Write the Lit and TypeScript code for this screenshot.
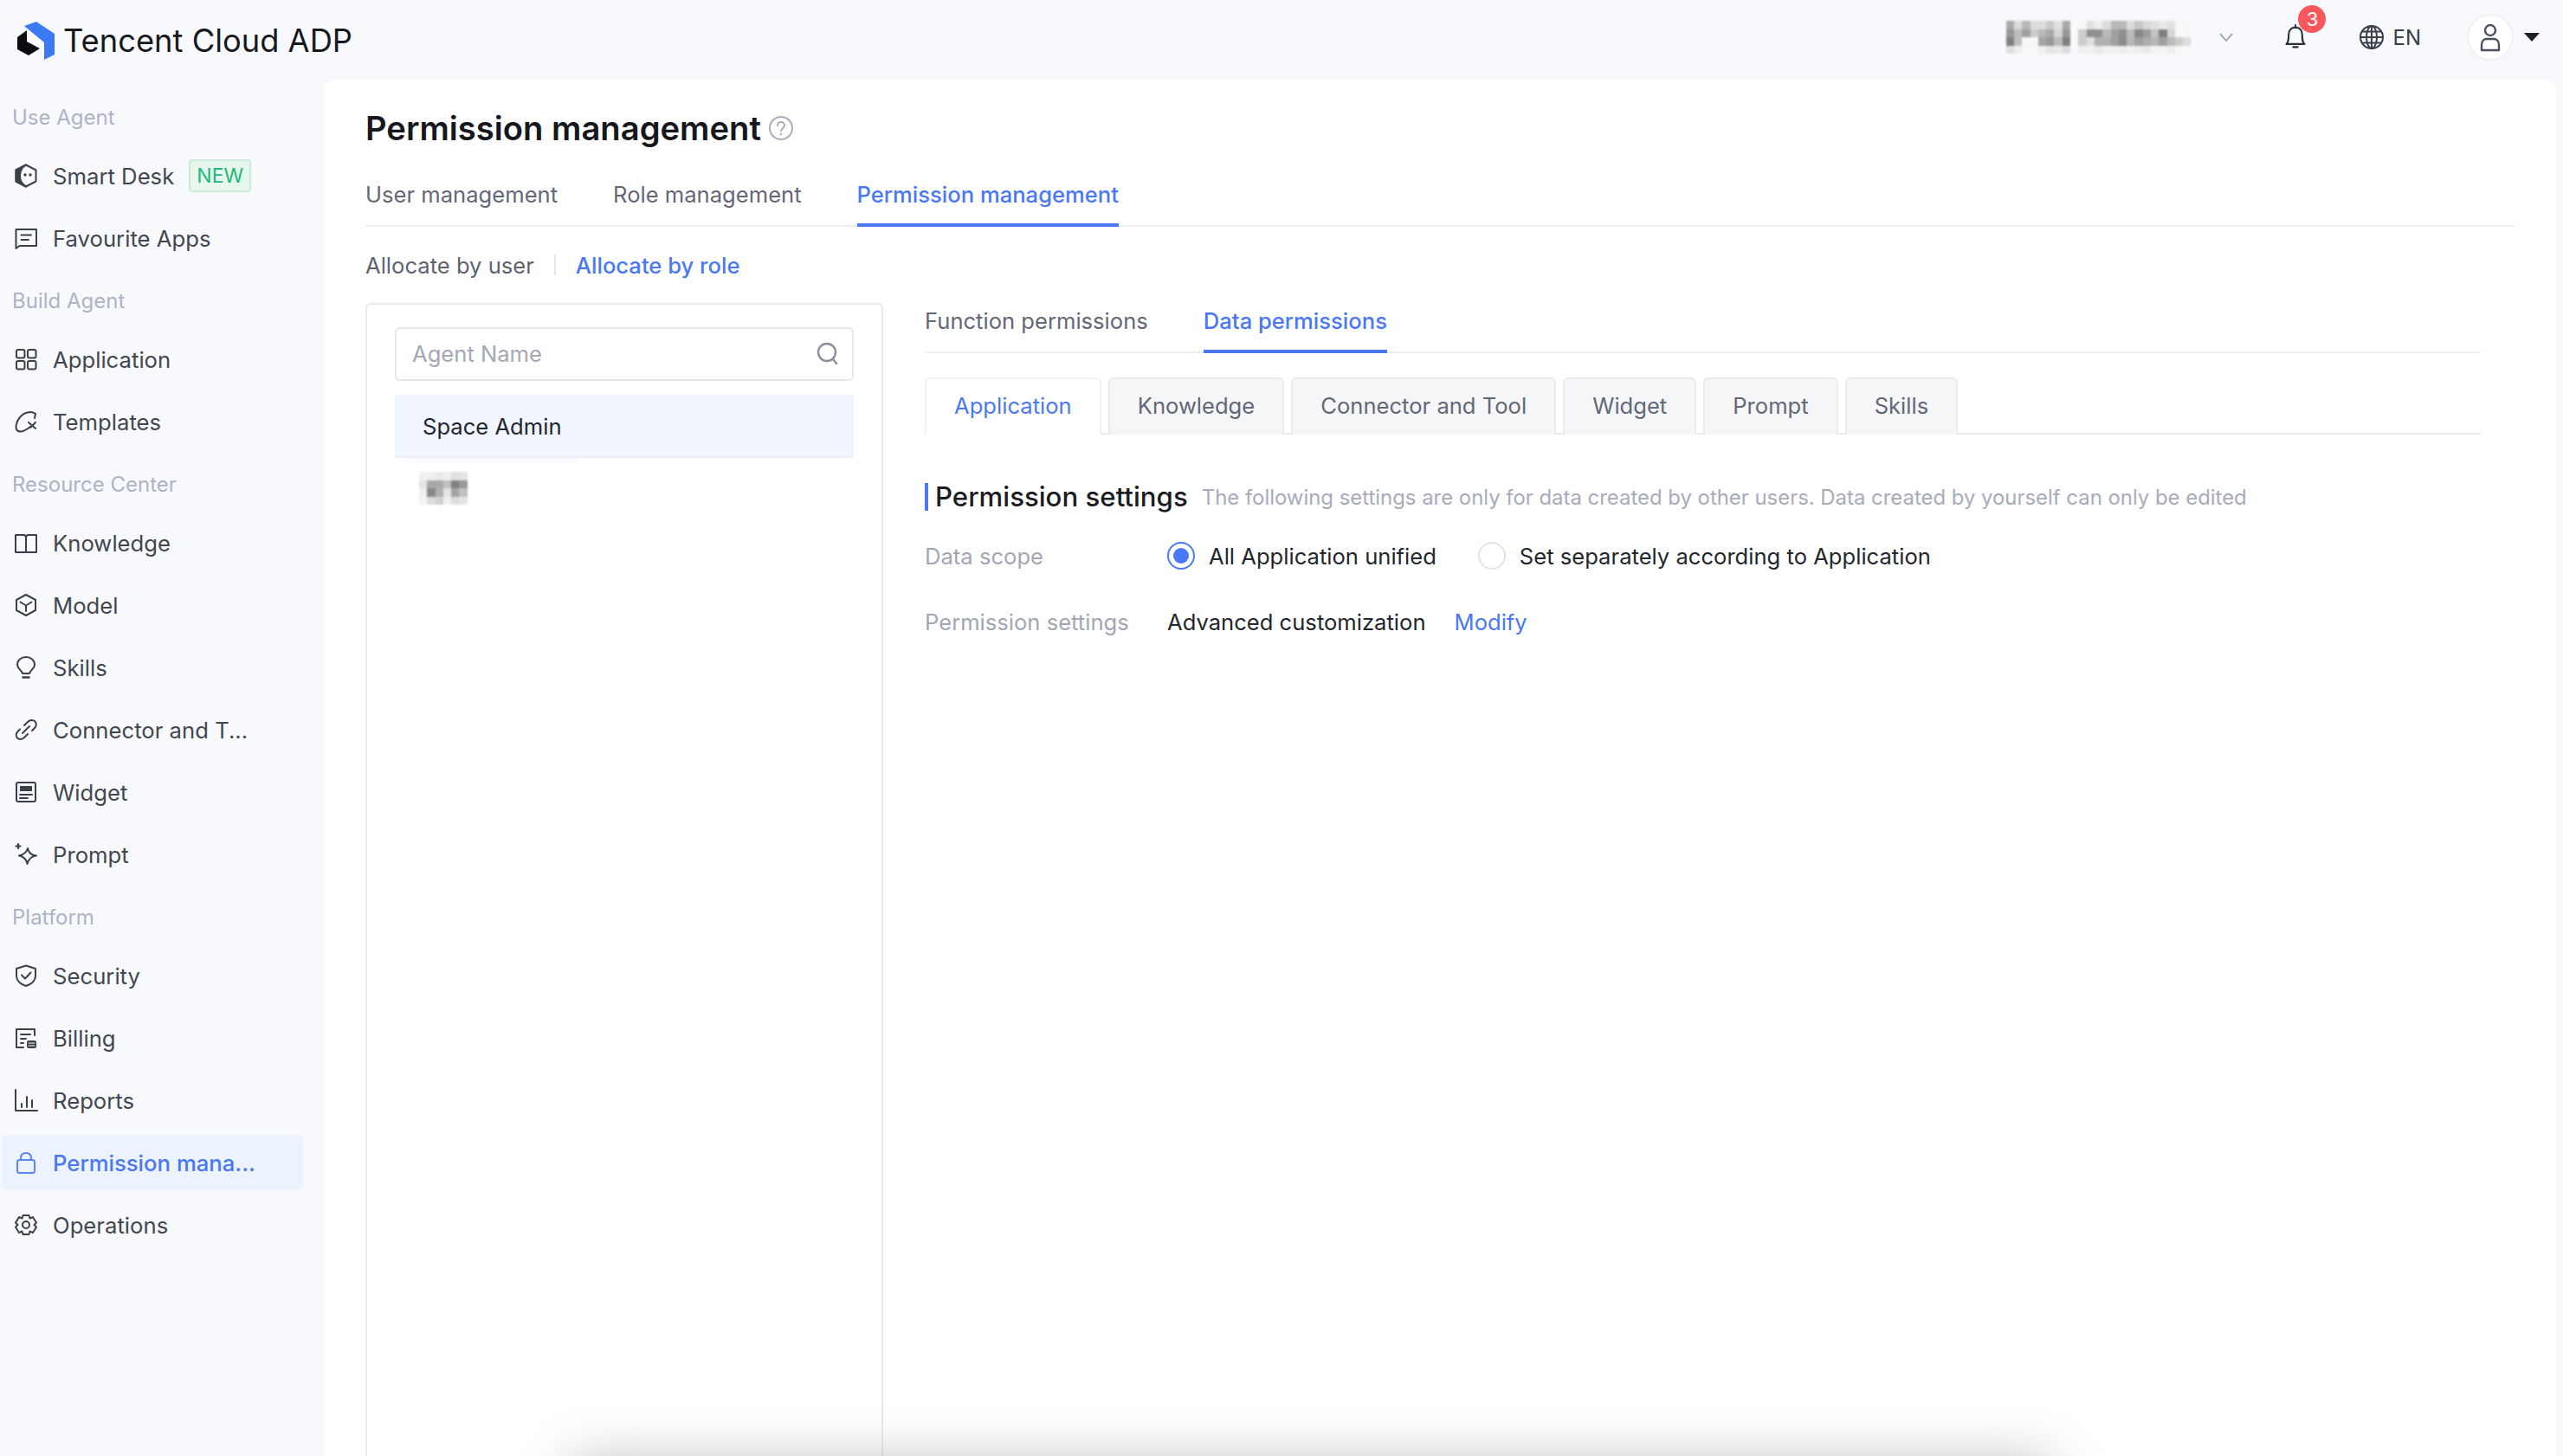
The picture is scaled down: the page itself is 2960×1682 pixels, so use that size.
import { LitElement, html, css, svg } from "lit";
import { customElement } from "lit/decorators.js";

const ic = (body: unknown) => html`<svg class="ic" viewBox="0 0 28 28" fill="none" stroke="currentColor" stroke-width="2" stroke-linejoin="round" stroke-linecap="round">${body}</svg>`;

const icons: Record<string, unknown> = {
  desk: ic(svg`<path d="M14 1.500 25.500 7.500V20.500L14 26.500 2.500 20.500V7.500Z" stroke-width="2"/><path d="M14 1.500 2.500 7.500V20.500L14 26.500C8 22 7 19 7 14 7 8 10 4 14 1.500Z" fill="currentColor"/><circle cx="13" cy="13" r="1.700" fill="currentColor" stroke="none"/><circle cx="19" cy="13" r="1.700" fill="currentColor" stroke="none"/>`),
  fav: ic(svg`<path d="M2.500 4H26V23H6.500L2.500 26Z"/><path d="M8.500 10.500H20M8.500 16H17"/>`),
  app: ic(svg`<rect x="3" y="3" width="9.500" height="9.500" rx="2"/><rect x="16" y="3" width="9.500" height="9.500" rx="2"/><rect x="3" y="16" width="9.500" height="9.500" rx="2"/><rect x="16" y="16" width="9.500" height="9.500" rx="2"/>`),
  tpl: ic(svg`<path d="M25 5C20 1.500 12 3 7 9 2 15 1 23 5 25 9 27 14 24 19 20"/><path d="M25 5 24 10M17 15 25 22M25 15 19 21" stroke-width="2"/>`),
  book: ic(svg`<path d="M2 5H11C13 5 14 6 14 8V25H2Z"/><path d="M26 5H17C15 5 14 6 14 8V25H26Z"/>`),
  model: ic(svg`<path d="M14 2 25 8V20L14 26 3 20V8Z"/><path d="M7.500 10.500 14 14.500 20.500 10.500M14 14.500V21"/>`),
  bulb: ic(svg`<path d="M10 21C9 17 4 15.500 4 11 4 5.500 8.500 2 14 2S24 5.500 24 11C24 15.500 19 17 18 21Z"/><path d="M10.500 25.500H17.500" stroke-width="2.500"/>`),
  link: ic(svg`<path d="M12 9 16 5C18.500 2.500 22.500 2.500 24.500 4.500 26.500 6.500 26 10 24 12L21 15"/><path d="M16 19 12 23C9.500 25.500 6 25.500 4 23.500 2 21.500 2.500 18 4.500 16L7 13.500"/><path d="M10 18 18 10"/>`),
  widget: ic(svg`<rect x="3" y="3" width="22" height="22" rx="2"/><rect x="7" y="7" width="14" height="6" fill="currentColor" stroke="none"/><path d="M7 17H21M7 21H16"/>`),
  prompt: ic(svg`<path d="M16 7C17 12 20 15 26 15.500 20 16 17 19.500 15.500 25 14.500 19.500 11 16.500 6 15.500 11 14.500 14.500 12 16 7Z"/><path d="M5 2V7M2.500 4.500H7.500" stroke-width="2.200"/>`),
  shield: ic(svg`<path d="M14 2.500 25 6V14C25 20 20 24 14 26 8 24 3 20 3 14V6Z"/><path d="M9 13.500 13 17.500 19.500 10.500"/>`),
  bill: ic(svg`<path d="M24 11V4H3V25H11"/><path d="M8 10H19M8 15H14M8 20H11"/><rect x="15" y="17" width="11" height="9" rx="2" fill="currentColor" stroke="none"/><path d="M17 20H24M17 23H24" stroke="#f7f9fd" stroke-width="1.200"/>`),
  report: ic(svg`<path d="M2 2V26H27"/><path d="M9 18V22M15 10V22M21 14V22"/>`),
  lock: ic(svg`<rect x="4" y="11" width="20" height="15" rx="2.500"/><path d="M8 11V9C8 5 10.500 3 14 3S20 5 20 9V11"/>`),
  gear: ic(svg`<path d="M10.500 3H17.500L18.500 6.500 22 5 26 11.500 23.500 14 26 16.500 22 23 18.500 21.500 17.500 25H10.500L9.500 21.500 6 23 2 16.500 4.500 14 2 11.500 6 5 9.500 6.500Z"/><circle cx="14" cy="14" r="4"/>`),
};

type Row = { t?: string; i?: string; l?: string; active?: boolean; badge?: boolean };
const nav: Row[] = [
  { t: "Use Agent" },
  { i: "desk", l: "Smart Desk", badge: true },
  { i: "fav", l: "Favourite Apps" },
  { t: "Build Agent" },
  { i: "app", l: "Application" },
  { i: "tpl", l: "Templates" },
  { t: "Resource Center" },
  { i: "book", l: "Knowledge" },
  { i: "model", l: "Model" },
  { i: "bulb", l: "Skills" },
  { i: "link", l: "Connector and T..." },
  { i: "widget", l: "Widget" },
  { i: "prompt", l: "Prompt" },
  { t: "Platform" },
  { i: "shield", l: "Security" },
  { i: "bill", l: "Billing" },
  { i: "report", l: "Reports" },
  { i: "lock", l: "Permission mana...", active: true },
  { i: "gear", l: "Operations" },
];

const blurOrg = [
  "aa dc b8 dc dc c8 e0 a8 ff f8 e0 ee dc b8 b8 dc c8 d8 e0 e8 e0 f8 f8",
  "98 bc a0 cc b8 a8 d4 98 ff cc 90 90 b8 a0 90 bc 88 9c c4 80 d4 f8 f8",
  "80 c0 f8 f8 a4 98 bc 80 ff cc e0 b0 b0 a0 8c b8 a0 ac b8 a0 bc cc dc",
  "e0 f0 f8 f8 f0 e4 e8 dc ff f0 f0 e8 f0 f0 ec f0 ec e8 f4 f4 ec f8 f8",
];
const blurName = [
  "f0 f0 ea ee e0 e4",
  "e4 a8 a8 c0 80 98",
  "f0 88 b0 e4 a4 c0",
  "f4 dc d0 f0 dc e4",
];

const mosaic = (rows: string[], cls: string) => html`<div class="mosaic ${cls}">
  ${rows.map((r) => html`<div class="mrow">${r.split(" ").map((c) => html`<i style="background:${c === "ff" ? "transparent" : `#${c}${c}${c}`}"></i>`)}</div>`)}
</div>`;

@customElement("app-root")
export class AppRoot extends LitElement {
  static styles = css`
    :host { display: block; height: 1682px; overflow: hidden; position: relative; background: #f7f9fd; font-family: Inter, "Liberation Sans", sans-serif; color: #1c1f26; }
    * { box-sizing: border-box; }
    .header { height: 92px; display: flex; align-items: center; padding: 0 27px 6px 18px; }
    .logo { width: 55px; height: 48px; flex: none; margin-top: 8px; }
    .brand { font-size: 36.300px; color: #17191f; line-height: 44px; margin-top: 8px; }
    .spacer { flex: 1; }
    .mosaic { display: flex; flex-direction: column; filter: blur(0.800px); }
    .mrow { display: flex; }
    .mosaic i { display: block; width: 9.300px; height: 9.500px; }
    .chev { width: 20px; height: 20px; color: #a9aebd; margin-left: 31px; }
    .bell-wrap { position: relative; margin-left: 54px; width: 32px; height: 36px; color: #2b2f38; display: flex; align-items: center; justify-content: center; }
    .bell-wrap svg { width: 28px; height: 32px; display: block; }
    .badge { position: absolute; left: 19px; top: -19px; width: 32px; height: 32px; border-radius: 50%; background: #f9575c; color: #fff; font-size: 22px; display: flex; align-items: center; justify-content: center; }
    .globe { width: 30px; height: 30px; margin-left: 57px; color: #3a3e48; }
    .en { font-size: 24px; color: #3a3e48; margin-left: 9px; }
    .avatar { width: 54px; height: 54px; border-radius: 50%; background: #fff; border: 2px solid #f0f1f5; margin-left: 53px; display: flex; align-items: center; justify-content: center; color: #4a5060; }
    .avatar svg { width: 30px; height: 34px; }
    .caret { margin-left: 12px; width: 0; height: 0; border-left: 9px solid transparent; border-right: 9px solid transparent; border-top: 10px solid #1c1f26; }

    .body { display: flex; height: 1590px; }
    .side { width: 374px; flex: none; padding-top: 11px; }
    .gt { height: 64px; line-height: 65px; padding-left: 14px; font-size: 24px; color: #aeb3c6; margin-bottom: 4px; }
    .it { height: 64px; width: 348px; margin: 0 0 8px 2px; border-radius: 6px; display: flex; align-items: center; padding-left: 14px; font-size: 25.700px; color: #43464f; }
    .it.active { background: #ecf2fe; color: #4a78f5; font-weight: 500; }
    .ic { width: 28px; height: 28px; flex: none; color: #3d4049; }
    .it.active .ic { color: #5b86f7; }
    .lb { margin-left: 17px; white-space: nowrap; }
    .new { margin-left: 17px; height: 38px; width: 72px; border: 2px solid #c8ecd8; background: #e6f7ee; border-radius: 4px; color: #1fb979; font-size: 23px; display: flex; align-items: center; justify-content: center; }

    .main { flex: none; width: 2578px; background: #fff; border-radius: 14px 14px 0 0; padding: 36px 47px 0 48px; }
    .title { display: flex; align-items: center; height: 40px; font-size: 38.200px; font-weight: 600; color: #16181d; }
    .help { width: 30px; height: 30px; margin-left: 8px; color: #a9aebd; }
    .tabs { display: flex; gap: 64px; margin-top: 19px; height: 75px; border-bottom: 2px solid #eef0f3; }
    .tab { font-size: 25.600px; color: #636776; height: 75px; line-height: 75px; border-bottom: 4px solid transparent; }
    .tab.on { color: #4a78f5; border-bottom-color: #4a78f5; font-weight: 500; }
    .alloc { display: flex; align-items: center; height: 40px; margin-top: 24px; font-size: 25.600px; color: #5e6270; }
    .alloc .sep { width: 2px; height: 24px; background: #e6e8ec; margin: 0 23px; }
    .alloc .on { color: #4a78f5; font-weight: 500; }
    .panels { display: flex; margin-top: 24px; }
    .left { width: 598px; height: 1400px; flex: none; border: 2px solid #e7e9ee; border-radius: 6px 6px 0 0; padding: 26px 32px; }
    .search { height: 62px; border: 2px solid #e4e6eb; border-radius: 6px; display: flex; align-items: center; justify-content: space-between; padding: 0 13px 2px 18px; font-size: 25.600px; color: #a4a8b6; }
    .search svg { width: 30px; height: 30px; color: #8a8f9d; }
    .role { height: 73px; margin-top: 16px; background: #f1f5fe; border-bottom: 2px solid #e9eefa; padding: 2px 0 0 32px; display: flex; align-items: center; font-size: 25.600px; color: #23262d; }
    .role-b { padding: 16px 0 0 28px; }
    .right { flex: 1; margin: 0 40px 0 48px; min-width: 0; }
    .subtabs { display: flex; gap: 64px; height: 58px; border-bottom: 2px solid #eef0f3; }
    .st { font-size: 25.600px; color: #636776; height: 58px; line-height: 42px; border-bottom: 4px solid transparent; }
    .st.on { color: #4a78f5; border-bottom-color: #4a78f5; font-weight: 500; }
    .cards { display: flex; gap: 8px; margin-top: 28px; height: 66px; border-bottom: 2px solid #e9ebef; }
    .cd { height: 66px; padding: 0 32px 3px; border: 2px solid #e8eaef; border-bottom: none; border-radius: 6px 6px 0 0; background: #f5f6f8; color: #636776; font-size: 25.600px; display: flex; align-items: center; }
    .cd.on { background: #fff; color: #4a78f5; border-color: #f0f1f4; }
    .sec { display: flex; align-items: center; margin-top: 52px; height: 40px; }
    .bar { width: 4px; height: 32px; background: #4a78f5; }
    .sec h2 { margin: 0 0 0 8px; font-size: 31.200px; font-weight: 500; color: #1a1c22; }
    .sec span { margin-left: 16px; font-size: 23.900px; color: #a7abbb; }
    .frow { display: flex; align-items: center; height: 40px; font-size: 25.600px; color: #23262d; }
    .frow.a { margin-top: 28px; }
    .frow.b { margin-top: 36px; }
    .fl { width: 280px; flex: none; color: #a2a6b3; }
    .radio { width: 32px; height: 32px; border-radius: 50%; border: 2px solid #e2e4ea; flex: none; margin-right: 16px; display: flex; align-items: center; justify-content: center; }
    .radio.on { border-color: #4a78f5; }
    .radio.on::after { content: ""; width: 18px; height: 18px; border-radius: 50%; background: #4a78f5; }
    .gap { width: 48px; }
    .mod { color: #4a78f5; margin-left: 33px; }
    .shade { position: absolute; left: 660px; width: 1710px; top: 1690px; height: 100px; background: #b9b9b9; filter: blur(32px); pointer-events: none; }
    .scrap { position: absolute; left: 467px; top: 529px; width: 200px; height: 6px; background: #fafbfe; }
  `;

  render() {
    return html`
      <div class="header">
        <svg class="logo" viewBox="0 0 55 48"><path d="M10 7 24 2 45 16V40L33 46V26Z" fill="#3b79f6"/><path d="M2 20 13 12V25L28 33 15 41 2 34Z" fill="#0c0d10"/></svg>
        <div class="brand">Tencent Cloud ADP</div>
        <div class="spacer"></div>
        ${mosaic(blurOrg, "org")}
        <svg class="chev" viewBox="0 0 20 20" fill="none" stroke="currentColor" stroke-width="2"><path d="M3 6 10 14 17 6"/></svg>
        <div class="bell-wrap">
          <svg viewBox="0 0 32 36" fill="none" stroke="currentColor" stroke-width="2.400" stroke-linejoin="round"><path d="M4 27C7 24 7 21 7 15 7 9 10.500 5 16 5S25 9 25 15C25 21 25 24 28 27Z"/><path d="M16 2V5M13 31H19" stroke-linecap="round"/></svg>
          <div class="badge">3</div>
        </div>
        <svg class="globe" viewBox="0 0 30 30" fill="none" stroke="currentColor" stroke-width="2"><circle cx="15" cy="15" r="13"/><ellipse cx="15" cy="15" rx="6" ry="13"/><path d="M2 15H28M4 8.500H26M4 21.500H26M15 2V28"/></svg>
        <div class="en">EN</div>
        <div class="avatar"><svg viewBox="0 0 30 34" fill="none" stroke="currentColor" stroke-width="2.400"><circle cx="15" cy="9" r="6"/><path d="M5 32V26C5 21 8 19 11 19H19C22 19 25 21 25 26V32Z" stroke-linejoin="round"/></svg></div>
        <div class="caret"></div>
      </div>
      <div class="body">
        <nav class="side">
          ${nav.map((n) => n.t
            ? html`<div class="gt">${n.t}</div>`
            : html`<div class="it ${n.active ? "active" : ""}">${icons[n.i!]}<span class="lb">${n.l}</span>${n.badge ? html`<span class="new">NEW</span>` : ""}</div>`)}
        </nav>
        <main class="main">
          <div class="title">Permission management
            <svg class="help" viewBox="0 0 30 30" fill="none" stroke="currentColor" stroke-width="2"><circle cx="15" cy="15" r="13"/><path d="M11 12C11 9.500 13 8 15 8S19 9.500 19 12C19 15 15 15 15 18.500" stroke-linecap="round"/><circle cx="15" cy="22" r="1.300" fill="currentColor" stroke="none"/></svg>
          </div>
          <div class="tabs">
            <div class="tab">User management</div>
            <div class="tab">Role management</div>
            <div class="tab on">Permission management</div>
          </div>
          <div class="alloc"><span>Allocate by user</span><span class="sep"></span><span class="on">Allocate by role</span></div>
          <div class="panels">
            <div class="left">
              <div class="search"><span>Agent Name</span>
                <svg viewBox="0 0 30 30" fill="none" stroke="currentColor" stroke-width="2.400" stroke-linecap="round"><circle cx="14" cy="14" r="10"/><path d="M21 22 25 27"/></svg>
              </div>
              <div class="role">Space Admin</div>
              <div class="role-b">${mosaic(blurName, "name")}</div>
            </div>
            <div class="right">
              <div class="subtabs"><div class="st">Function permissions</div><div class="st on">Data permissions</div></div>
              <div class="cards">
                <div class="cd on">Application</div>
                <div class="cd">Knowledge</div>
                <div class="cd">Connector and Tool</div>
                <div class="cd">Widget</div>
                <div class="cd">Prompt</div>
                <div class="cd">Skills</div>
              </div>
              <div class="sec"><div class="bar"></div><h2>Permission settings</h2><span>The following settings are only for data created by other users. Data created by yourself can only be edited</span></div>
              <div class="frow a"><div class="fl">Data scope</div><div class="radio on"></div>All Application unified<div class="gap"></div><div class="radio"></div>Set separately according to Application</div>
              <div class="frow b"><div class="fl">Permission settings</div>Advanced customization<span class="mod">Modify</span></div>
            </div>
          </div>
        </main>
      </div>
      <div class="scrap"></div>
      <div class="shade"></div>
    `;
  }
}
